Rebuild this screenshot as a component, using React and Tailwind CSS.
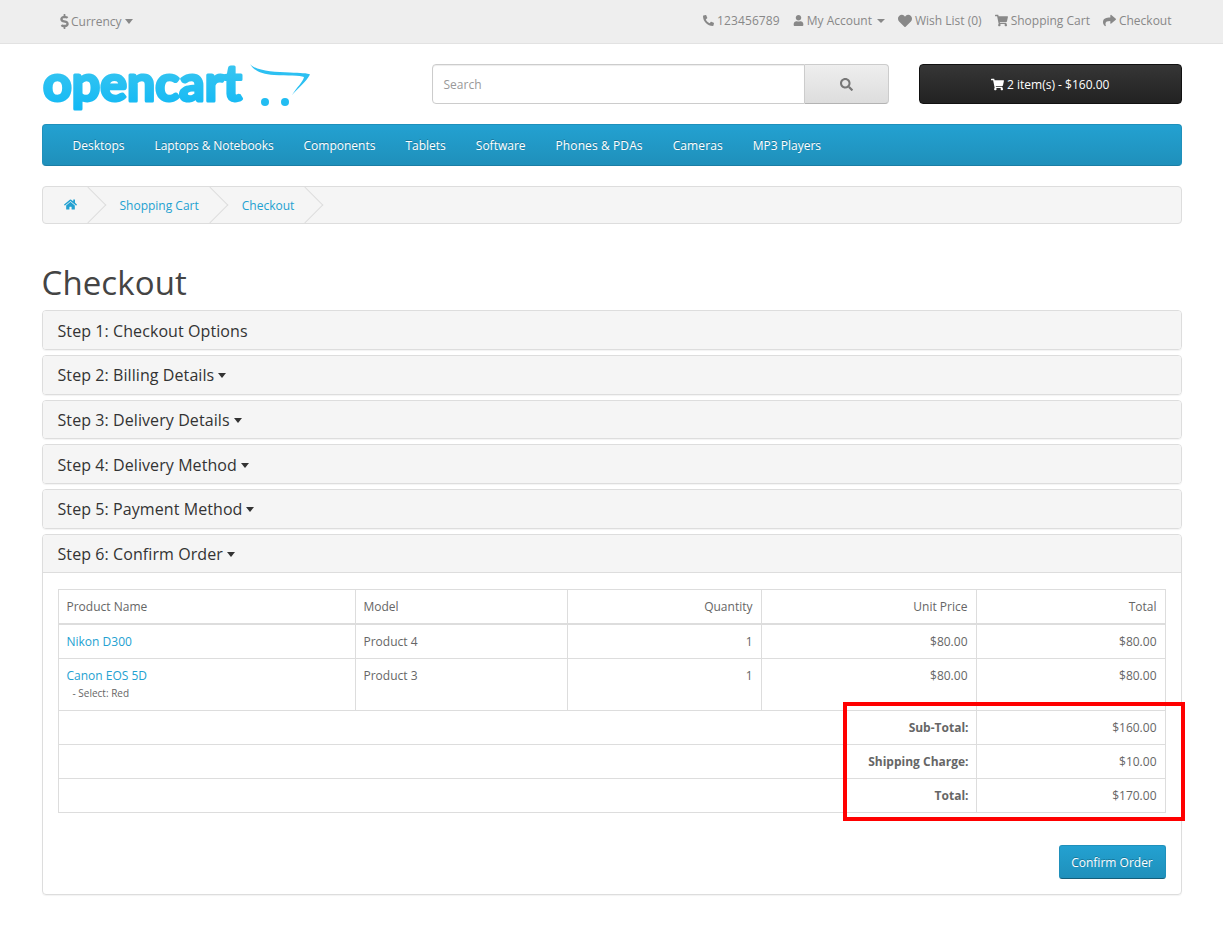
import React from "react";
import { FaPhone, FaUser, FaHeart, FaShoppingCart, FaShare, FaSearch, FaHome, FaDollarSign } from "react-icons/fa";

function Logo() {
  return (
    <svg width="270" height="55" viewBox="0 0 270 55" className="block overflow-visible" aria-label="opencart">
      <defs>
        <linearGradient id="lg" x1="0" y1="0" x2="0" y2="1">
          <stop offset="0" stopColor="#43c9ef" />
          <stop offset="1" stopColor="#10b8f5" />
        </linearGradient>
      </defs>
      <text x="1" y="38" fontFamily="'Lato', sans-serif" fontWeight="700" fontSize="50" textLength="199" lengthAdjust="spacingAndGlyphs" fill="url(#lg)" stroke="url(#lg)" strokeWidth="3" strokeLinejoin="round">opencart</text>
      <path d="M208 1 C214 8 232 9 248 9.5 C258 10 266 10 268 11.5 C264 19 256 25 250 32 C255 24 261 19 262 14 C258 12 246 13 232 12 C220 11 212 8 208 1 Z" fill="#2cc0f2" />
      <circle cx="223" cy="39" r="4" fill="#22bdf2" />
      <circle cx="243" cy="39" r="4" fill="#22bdf2" />
    </svg>
  );
}

function TopLink({ icon, children, caret, className = "" }) {
  return (
    <span className={`flex items-center text-[#888] ${className}`}>
      <span className="mr-[3px] text-[#888]">{icon}</span>
      {children}
      {caret && <span className="ml-[5px] mt-[1px] w-0 h-0 border-x-[4px] border-x-transparent border-t-[4px] border-t-[#888]" />}
    </span>
  );
}

const menu = [
  ["Desktops", ""],
  ["Laptops & Notebooks", "tracking-[-0.1px]"],
  ["Components", ""],
  ["Tablets", ""],
  ["Software", ""],
  ["Phones & PDAs", "tracking-[0.1px]"],
  ["Cameras", "tracking-[0.1px]"],
  ["MP3 Players", ""],
];

function Crumb({ children }) {
  return (
    <li className="relative pl-[21px] pr-[22px] pt-[1px] leading-[18px]">
      <a className="text-[#23a1d1]">{children}</a>
      <span className="absolute top-[-4px] right-[-2px] w-[26px] h-[26px] border-r border-b border-[#ddd] rotate-[-45deg]" />
    </li>
  );
}

function Step({ children, caret = true, open }) {
  return (
    <div className={`flex items-center px-[15px] pt-[1.2px] bg-[#f5f5f5] text-[16px] tracking-[0.08px] text-[#333] ${open ? "h-[38.8px] border-b border-[#ddd]" : "h-[37.7px]"}`}>
      {children}
      {caret && <span className="ml-[4px] mt-[1px] w-0 h-0 border-x-[4.5px] border-x-transparent border-t-[5px] border-t-[#333]" />}
    </div>
  );
}

const StepPanel = (props) => (
  <div className="mb-[5px] border border-[#ddd] rounded-[4px] overflow-hidden shadow-[0_1px_1px_rgba(0,0,0,0.05)]">
    <Step {...props} />
  </div>
);

const cell = "border border-[#ddd] px-[8px]";

export default function App() {
  return (
    <div className="relative bg-white min-h-[929px] text-[12px] text-[#666] leading-[20px]" style={{ fontFamily: "'Open Sans', sans-serif" }}>
      <nav className="h-[44px] bg-[#eee] border-b border-[#e2e2e2]">
        <div className="mx-auto w-[1170px] px-[15px] h-full flex items-center justify-between">
          <div className="flex items-center pl-[18px] text-[#888]">
            <FaDollarSign className="w-[9px] h-[15px] mr-[2.5px] text-[#888]" />
            <span>Currency</span>
            <span className="ml-[3px] w-0 h-0 border-x-[4px] border-x-transparent border-t-[5px] border-t-[#888]" />
          </div>
          <div className="flex items-center gap-[13px] pr-[10px] -mt-[2px]">
            <TopLink className="tracking-[0.1px]" icon={<FaPhone className="text-[11px] -scale-x-100" />}>123456789</TopLink>
            <TopLink icon={<FaUser className="text-[11px]" />} caret>My Account</TopLink>
            <TopLink icon={<FaHeart className="text-[14px]" />}>Wish List (0)</TopLink>
            <TopLink icon={<FaShoppingCart className="text-[13px]" />}>Shopping Cart</TopLink>
            <TopLink icon={<FaShare className="text-[13px]" />}>Checkout</TopLink>
          </div>
        </div>
      </nav>

      <div className="mx-auto w-[1170px] px-[15px]">
        <header className="flex items-start pt-[20px] h-[80px]">
          <div className="w-[390px] shrink-0 -mt-[1px]"><Logo /></div>
          <div className="w-[457.5px] flex h-[40px]">
            <div className="flex-1 flex items-center pl-[11px] pt-[1px] border border-[#ccc] rounded-l-[4px] bg-white text-[#999] shadow-[inset_0_1px_1px_rgba(0,0,0,0.075)]">Search</div>
            <div className="w-[84px] flex items-center justify-center border border-[#ccc] border-l-0 border-b-[#b3b3b3] rounded-r-[4px] bg-gradient-to-b from-[#eeeeee] to-[#dddddd] text-[#777] text-[13px]"><FaSearch /></div>
          </div>
          <div className="w-[262.5px] ml-[30px] h-[40px] flex items-center justify-center pt-[1px] gap-[3px] border border-[#111] rounded-[4px] bg-gradient-to-b from-[#363636] to-[#222222] text-white">
            <FaShoppingCart className="text-[13px]" />
            <span>2 item(s) - $160.00</span>
          </div>
        </header>

        <div className="h-[42px] flex items-center pl-[15px] pt-[1px] rounded-[4px] border border-[#1f90bb] border-b-[#1b7ea5] bg-gradient-to-b from-[#23a1d1] to-[#1f90bb]">
          {menu.map(([m, t]) => (
            <span key={m} className={`px-[15px] text-white [text-shadow:0_-1px_0_rgba(0,0,0,0.25)] ${t}`}>{m}</span>
          ))}
        </div>

        <ul className="mt-[20px] h-[38px] flex items-center border border-[#ddd] rounded-[4px] bg-[#f5f5f5] overflow-hidden">
          <Crumb><FaHome className="text-[13px] inline-block -mt-[3px]" /></Crumb>
          <Crumb>Shopping Cart</Crumb>
          <Crumb>Checkout</Crumb>
        </ul>

        <h1 className="mt-[37px] mb-[6.2px] h-[43px] text-[33px] tracking-[0.1px] leading-[43px] text-[#444]">Checkout</h1>

        <StepPanel caret={false}>Step 1: Checkout Options</StepPanel>
        <StepPanel>Step 2: Billing Details</StepPanel>
        <StepPanel>Step 3: Delivery Details</StepPanel>
        <StepPanel>Step 4: Delivery Method</StepPanel>
        <StepPanel>Step 5: Payment Method</StepPanel>

        <div className="border border-[#ddd] rounded-[4px] overflow-hidden shadow-[0_1px_1px_rgba(0,0,0,0.05)]">
          <Step open>Step 6: Confirm Order</Step>
          <div className="p-[15px] pt-[15.3px]">
            <table className="w-[1107px] table-fixed border-collapse">
              <colgroup>
                <col className="w-[297px]" />
                <col className="w-[212px]" />
                <col className="w-[194px]" />
                <col className="w-[215px]" />
                <col className="w-[189px]" />
              </colgroup>
              <thead>
                <tr className="h-[35px]">
                  <td className={`${cell} pt-[1px] border-b-2 align-middle`}>Product Name</td>
                  <td className={`${cell} pt-[1px] border-b-2 align-middle`}>Model</td>
                  <td className={`${cell} pt-[1px] border-b-2 align-middle text-right`}>Quantity</td>
                  <td className={`${cell} pt-[1px] border-b-2 align-middle text-right`}>Unit Price</td>
                  <td className={`${cell} pt-[1px] border-b-2 align-middle text-right`}>Total</td>
                </tr>
              </thead>
              <tbody>
                <tr className="h-[34px]">
                  <td className={`${cell} pt-[1px] align-middle`}><a className="text-[#23a1d1]">Nikon D300</a></td>
                  <td className={`${cell} pt-[1px] align-middle`}>Product 4</td>
                  <td className={`${cell} pt-[1px] align-middle text-right`}>1</td>
                  <td className={`${cell} pt-[1px] align-middle text-right`}>$80.00</td>
                  <td className={`${cell} pt-[1px] align-middle text-right`}>$80.00</td>
                </tr>
                <tr className="h-[52px]">
                  <td className={`${cell} align-top pt-[7px]`}>
                    <a className="block leading-[20px] text-[#23a1d1]">Canon EOS 5D</a>
                    <div className="pl-[6px] text-[10px] leading-[14px]">- Select: Red</div>
                  </td>
                  <td className={`${cell} align-top pt-[7px]`}>Product 3</td>
                  <td className={`${cell} align-top pt-[7px] text-right`}>1</td>
                  <td className={`${cell} align-top pt-[7px] text-right`}>$80.00</td>
                  <td className={`${cell} align-top pt-[7px] text-right`}>$80.00</td>
                </tr>
                {[["Sub-Total:", "$160.00"], ["Shipping Charge:", "$10.00"], ["Total:", "$170.00"]].map(([a, b]) => (
                  <tr key={a} className="h-[34px]">
                    <td colSpan={4} className={`${cell} pr-[7px] pt-[1px] align-middle text-right font-bold`}>{a}</td>
                    <td className={`${cell} pt-[1px] align-middle text-right`}>{b}</td>
                  </tr>
                ))}
              </tbody>
            </table>
            <div className="mt-[32px] flex justify-end">
              <div className="w-[107px] h-[34px] flex items-center justify-center pt-[2px] rounded-[3px] border border-[#1f90bb] border-b-[#145e7a] bg-gradient-to-b from-[#23a1d1] to-[#1f90bb] text-white [text-shadow:0_-1px_0_rgba(0,0,0,0.25)]">Confirm Order</div>
            </div>
          </div>
        </div>
      </div>

      <div className="absolute left-[843px] top-[702px] w-[342px] h-[119px] border-[4px] border-[#ff0000] pointer-events-none" />
    </div>
  );
}
